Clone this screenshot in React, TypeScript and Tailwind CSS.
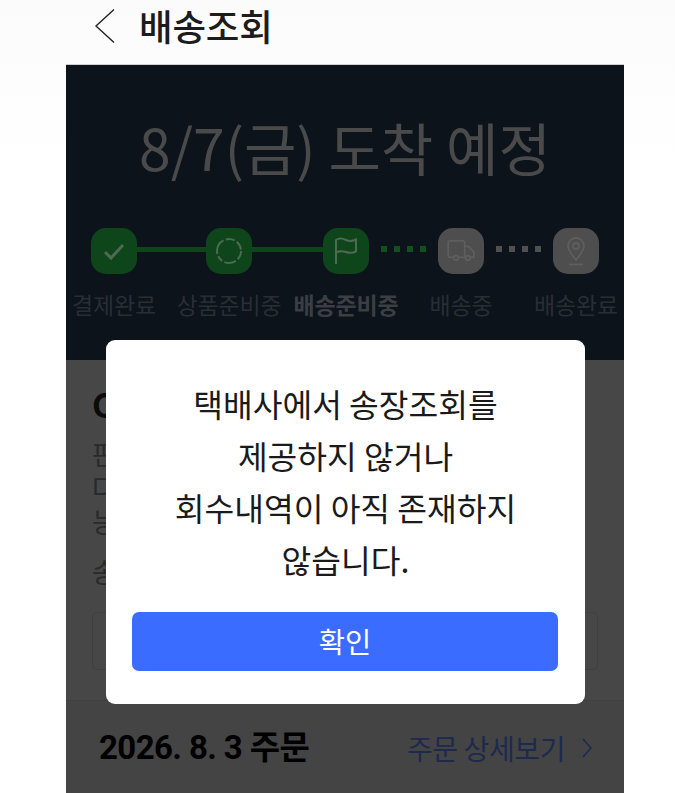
import React from "react";

function Step({ icon, label, done, bold }: { icon: React.ReactNode; label: string; done?: boolean; bold?: boolean }) {
  return (
    <div className="flex w-[46px] flex-col items-center">
      <div className={`flex h-[46px] w-[46px] items-center justify-center rounded-[15px] ${done ? "bg-[#0f451b]" : "bg-[#4e4e4e]"}`}>
        {icon}
      </div>
      <div className={`mt-[14px] whitespace-nowrap text-[23px] leading-[32px] tracking-[-0.2px] ${bold ? "font-bold text-[#3b3f44]" : "text-[#292e35]"}`}>
        {label}
      </div>
    </div>
  );
}

function Line({ w }: { w: string }) {
  return <div className={`mt-[19px] h-[5px] bg-[#0f451b] ${w}`} />;
}

function Dots({ green }: { green?: boolean }) {
  const c = green ? "bg-[#0f5220]" : "bg-[#505050]";
  return (
    <div className="mt-[18px] flex w-[69px] justify-center gap-[7px]">
      <div className={`h-[6px] w-[6px] ${c}`} />
      <div className={`h-[6px] w-[6px] ${c}`} />
      <div className={`h-[6px] w-[6px] ${c}`} />
      <div className={`h-[6px] w-[6px] ${c}`} />
    </div>
  );
}

export default function App() {
  return (
    <div className="relative h-[793px] w-full overflow-hidden bg-linear-to-b from-[#fbfbfb] to-white to-[20%] font-['Noto_Sans_CJK_KR','Noto_Sans',sans-serif]">
      <header className="flex h-[64px] items-center pb-[12px] pl-[94px]">
        <svg width="21" height="36" viewBox="0 0 21 36" fill="none" stroke="#222" strokeWidth="1.4">
          <path d="M20 1.5 2 18l18 16.5" />
        </svg>
        <h1 className="ml-[24px] text-[36.5px] font-medium leading-[44px] tracking-[-0.2px] text-[#1c1c1c]">배송조회</h1>
      </header>
      <div className="mx-[66px] w-[558px] border-t border-[#cfcfcf]">
        <section className="h-[295px] bg-[#0c131b] pt-[46px]">
          <div className="text-center text-[57px] leading-[70px] text-[#4a4a4a]">8/7(금) 도착 예정</div>
          <div className="mt-[47px] flex pl-[25px]">
            <Step
              done
              label="결제완료"
              icon={
                <svg width="24" height="24" viewBox="0 0 24 24" fill="none" stroke="#4d6a53" strokeWidth="3">
                  <path d="m3 13 6 6L21 6" />
                </svg>
              }
            />
            <Line w="w-[69px]" />
            <Step
              done
              label="상품준비중"
              icon={
                <svg width="28" height="28" viewBox="0 0 28 28" fill="none" stroke="#4d6a53" strokeWidth="2">
                  <circle cx="14" cy="14" r="12" strokeDasharray="9 2.5 12 2.5 6 2.5 16 2.5 9 2.5" />
                </svg>
              }
            />
            <Line w="w-[71px]" />
            <Step
              done
              bold
              label="배송준비중"
              icon={
                <svg width="24" height="28" viewBox="0 0 24 28" fill="none" stroke="#4d6a53" strokeWidth="2">
                  <path d="M2 27V3c3-2 6-2 10 0s7 1 10-.5v12c-3 1.5-6 2-10 .5s-7-1-10 .5" />
                </svg>
              }
            />
            <Dots green />
            <Step
              label="배송중"
              icon={
                <svg width="28" height="22" viewBox="0 0 30 24" fill="none" stroke="#5e5e5e" strokeWidth="1.8">
                  <path d="M7 19H3a2 2 0 0 1-2-2V3a2 2 0 0 1 2-2h14a2 2 0 0 1 2 2v16h-7M19 7h4l6 6v6h-4M19 19h1" />
                  <circle cx="9.5" cy="19.5" r="2.5" />
                  <circle cx="22.5" cy="19.5" r="2.5" />
                </svg>
              }
            />
            <Dots />
            <Step
              label="배송완료"
              icon={
                <svg width="22" height="30" viewBox="0 0 22 30" fill="none" stroke="#5e5e5e" strokeWidth="1.8">
                  <path d="M11 24C6 18 3 14 3 10a8 8 0 0 1 16 0c0 4-3 8-8 14Z" />
                  <circle cx="11" cy="10" r="3" />
                  <path d="M4 28.5h14" />
                </svg>
              }
            />
          </div>
        </section>
        <section className="h-[340px] bg-[#474747] pl-[26px] pt-[25px] text-[#2a2a2a]">
          <div className="text-[33px] font-bold leading-[38px] text-[#0b0b0b]">C</div>
          <div className="mt-[14px] text-[27px] leading-[34px]">
            판<br />다<br />능
          </div>
          <div className="mt-[16px] text-[27px] leading-[34px]">송</div>
          <div className="mt-[23px] h-[58px] w-[506px] rounded-[5px] border border-[#404040]" />
        </section>
        <section className="flex h-[93px] items-center justify-between border-t border-[#404040] bg-[#444444] pl-[33px] pr-[32px] pt-[2px]">
          <div className="font-['Roboto','Noto_Sans_CJK_KR',sans-serif] text-[33px] font-bold leading-[40px] tracking-[-0.6px] text-black">
            2026. 8. 3 주문
          </div>
          <div className="flex items-center gap-[17px] text-[28px] leading-[36px] tracking-[-0.4px] text-[#1d2a4e]">
            주문 상세보기
            <svg width="10" height="20" viewBox="0 0 10 20" fill="none" stroke="#1d2a4e" strokeWidth="1.6">
              <path d="m1 1 8 9-8 9" />
            </svg>
          </div>
        </section>
      </div>
      <div className="absolute left-[106px] top-[340px] h-[364px] w-[479px] rounded-[9px] bg-white px-[26px] pt-[37px]">
        <div className="text-center text-[32.3px] leading-[52px] text-[#1a1a1a]">
          <div>택배사에서 송장조회를</div>
          <div>제공하지 않거나</div>
          <div>회수내역이 아직 존재하지</div>
          <div>않습니다.</div>
        </div>
        <button className="mt-[27px] h-[59px] w-[426px] rounded-[7px] bg-[#3a6dff] text-[28.5px] text-white">확인</button>
      </div>
    </div>
  );
}
